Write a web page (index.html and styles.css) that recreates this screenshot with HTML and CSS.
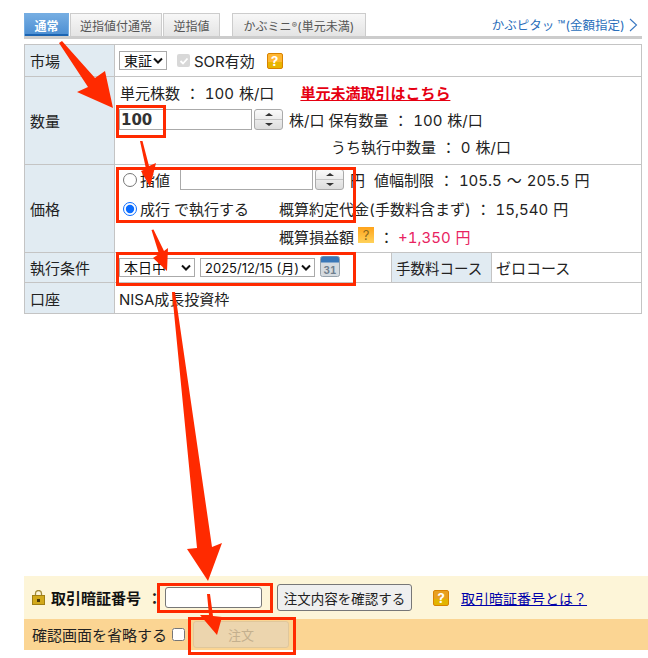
FILE: index.html
```html
<!DOCTYPE html>
<html lang="ja">
<head>
<meta charset="utf-8">
<title>注文</title>
<link rel="stylesheet" href="styles.css">
</head>
<body>
<div class="page">
  <nav class="tabs">
    <a class="tab active t1">通常</a>
    <a class="tab t2">逆指値付通常</a>
    <a class="tab t3">逆指値</a>
    <a class="tab t4">かぶミニ<span class="reg">®</span>(単元未満)</a>
    <a class="pitat">かぶピタッ<span class="tm">™</span>(金額指定)
      <svg class="chev" width="9" height="14" viewBox="0 0 9 14"><path d="M1 1l6.500 6L1 13" fill="none" stroke="#3a78c2" stroke-width="1.100"/></svg>
    </a>
  </nav>
  <table class="order">
    <colgroup><col class="c1"><col class="c2"><col class="c3"><col class="c4"></colgroup>
    <tr class="r-market">
      <th>市場</th>
      <td colspan="3">
        <div class="line">
          <select class="sel sel-market"><option>東証</option></select>
          <span class="sor"><span class="fake-check"><svg width="10" height="10" viewBox="0 0 10 10"><path d="M1.500 5l2.500 2.500 4.500-5" fill="none" stroke="#fff" stroke-width="1.800"/></svg></span>SOR有効</span>
          <span class="help help-market">?</span>
        </div>
      </td>
    </tr>
    <tr class="r-qty">
      <th>数量</th>
      <td colspan="3" class="stack">
        <div class="line l-unit"><span>単元株数 ： 100 株/口</span><a class="odd-link">単元未満取引はこちら</a></div>
        <div class="line l-qty">
          <input class="text qty" value="100">
          <span class="stepper"><i class="up"></i><i class="down"></i></span>
          <span class="unit">株/口</span><span class="held">保有数量 ： 100 株/口</span>
        </div>
        <div class="line l-exec">うち執行中数量 ： 0 株/口</div>
      </td>
    </tr>
    <tr class="r-price">
      <th>価格</th>
      <td colspan="3" class="stack">
        <div class="line l-limit">
          <label class="radio-label"><input type="radio" name="p" class="radio">指値</label>
          <input class="text price">
          <span class="stepper"><i class="up"></i><i class="down"></i></span>
          <span class="yen">円</span><span class="range">値幅制限 ： 105.5 ～ 205.5 円</span>
        </div>
        <div class="line l-market">
          <label class="radio-label"><input type="radio" name="p" class="radio" checked>成行</label>
          <span class="exec">で執行する</span>
          <span class="est">概算約定代金(手数料含まず) ： 15,540 円</span>
        </div>
        <div class="line l-pl">
          <span>概算損益額</span><span class="help help-pl">?</span><span class="colon">：</span><span class="plus">+1,350 円</span>
        </div>
      </td>
    </tr>
    <tr class="r-cond">
      <th>執行条件</th>
      <td>
        <div class="line">
          <select class="sel sel-day"><option>本日中</option></select>
          <select class="sel sel-date"><option>2025/12/15 (月)</option></select>
          <svg class="cal" width="20" height="21" viewBox="0 0 20 21">
            <rect x="0.500" y="0.500" width="19" height="20" rx="2" fill="#d5dbe0" stroke="#97a3ac"/>
            <path d="M1 2.500a2 2 0 0 1 2-2h14a2 2 0 0 1 2 2V6.500H1z" fill="#3a78b8"/>
            <text x="10" y="17.500" class="cal-num">31</text>
          </svg>
        </div>
      </td>
      <th class="course">手数料コース</th>
      <td>ゼロコース</td>
    </tr>
    <tr class="r-acct">
      <th>口座</th>
      <td colspan="3">NISA成長投資枠</td>
    </tr>
  </table>
  <section class="pin">
    <svg class="lock" width="13" height="15" viewBox="0 0 13 15">
      <path d="M3.500 6V3.500a3 3 0 0 1 6 0V6" fill="none" stroke="#a08a3a" stroke-width="1.300"/>
      <rect x="0.500" y="5.500" width="12" height="9" fill="#d2a91c" stroke="#a07f14"/>
      <rect x="5" y="9" width="3" height="3" fill="#4a3a08"/>
    </svg>
    <b class="pin-label">取引暗証番号</b><b class="pin-colon">：</b>
    <input class="pin-input" type="password">
    <button class="confirm">注文内容を確認する</button>
    <span class="help help-pin">?</span>
    <a class="pin-link">取引暗証番号とは？</a>
  </section>
  <section class="submit">
    <label class="skip">確認画面を省略する<input type="checkbox" class="skip-check"></label>
    <button class="order-btn" disabled>注文</button>
  </section>
</div>
<svg class="marks" width="648" height="658" viewBox="0 0 648 658">
  <g fill="none" stroke="#ff2a00" stroke-width="3">
    <rect x="117.500" y="106.500" width="47" height="30"/>
    <rect x="117.500" y="168.500" width="237" height="53"/>
    <rect x="117.500" y="253.500" width="237" height="31"/>
    <rect x="158.500" y="584.500" width="113" height="27"/>
    <rect x="189.500" y="618.500" width="105" height="35"/>
  </g>
  <g fill="#ff2a00">
    <polygon points="59,43 62,41 95,78 105,71 113,108 77,92 88,87"/>
    <polygon points="140,141 142.500,141 149,166 156,163 150,187 141,171 146,169"/>
    <polygon points="151.500,230 153.500,229.500 164,251 168,248 167,271 153,258 159,254"/>
    <polygon points="172,292 175,292 212,547 222,543 208,581 187,549 197,548"/>
    <polygon points="207,594 210,594 213,616 222,617 217,635 200,615 209,615"/>
  </g>
</svg>
</body>
</html>
```
FILE: styles.css
```css
* { box-sizing: border-box; }
html, body { margin: 0; padding: 0; background: #fff; }
body {
  width: 648px;
  height: 658px;
  overflow: hidden;
  position: relative;
  font-family: Inter, "Noto Sans CJK JP", sans-serif;
  font-size: 15px;
  font-variant-numeric: tabular-nums;
  word-spacing: 0.900px;
  color: #222;
}
.page { padding: 14px 0 0 24px; }

.tabs {
  display: flex;
  align-items: flex-end;
  width: 618px;
  height: 25px;
  border-bottom: 3px solid #ccc;
  font-size: 12px;
}
.tab {
  height: 23px;
  margin-right: 1px;
  display: flex;
  align-items: center;
  justify-content: center;
  background: linear-gradient(#f7f7f7, #e4e4e4);
  border: 1px solid #ccc;
  border-bottom: 0;
  color: #555;
}
.t1 { width: 45px; }
.t2 { width: 92px; }
.t3 { width: 57px; margin-right: 12px; }
.t4 { width: 134px; }
.reg { font-size: 8px; }
.active {
  background: linear-gradient(#75ade2, #4a8dd2);
  border-color: #75ade2;
  color: #fff;
  font-weight: bold;
  box-shadow: inset 0 -2px 0 #1b64b2;
}
.pitat {
  margin-left: auto;
  margin-right: 4px;
  align-self: flex-start;
  display: flex;
  align-items: center;
  margin-top: 1px;
  font-size: 12.500px;
  color: #2a6ebb;
}
.tm { font-size: 13px; margin-left: 3px; }
.chev { margin-left: 4px; }

.order {
  width: 618px;
  margin-top: 5px;
  border-collapse: collapse;
  table-layout: fixed;
  color: #222;
}
.c1 { width: 90px; }
.c2 { width: 277px; }
.c3 { width: 100px; }
.order th, .order td {
  border: 1px solid #c4c4c4;
  padding: 0 0 0 4px;
  font-weight: normal;
  text-align: left;
  vertical-align: middle;
}
.order th { background: #e1ebf2; padding-left: 5px; }
.order th.course { padding-left: 4px; font-size: 14.500px; }
.order td { background: #fff; }
.order td.stack { padding-bottom: 2px; }
.r-market { height: 32px; }
.r-qty, .r-price { height: 88px; }
.r-cond { height: 30px; }
.r-acct { height: 31px; }
.line { display: flex; align-items: center; white-space: nowrap; }

.sel {
  appearance: none;
  height: 19px;
  border: 1px solid #aaa;
  border-radius: 0;
  background: #fff url("data:image/svg+xml,%3Csvg xmlns='http://www.w3.org/2000/svg' width='10' height='7'%3E%3Cpath d='M1 1.500l4 4 4-4' fill='none' stroke='%23111' stroke-width='2'/%3E%3C/svg%3E") no-repeat right 3px center;
  font-family: inherit;
  font-size: 14px;
  color: #111;
  padding: 0 0 0 4px;
  word-spacing: 0;
}
.sel-market { width: 48px; }
.sel-day { width: 76px; }
.sel-date { width: 115px; margin-left: 5px; font-size: 13px; font-variant-numeric: normal; }
.sor { display: flex; align-items: center; margin-left: 10px; }
.fake-check {
  width: 13px;
  height: 13px;
  border-radius: 2px;
  background: #d8d8d8;
  margin-right: 4px;
  display: flex;
  align-items: center;
  justify-content: center;
}
.help {
  display: inline-flex;
  align-items: center;
  justify-content: center;
  width: 16px;
  height: 16px;
  background: linear-gradient(#ffb733 0 60%, #e8b400 60%);
  border: 1px solid #d98200;
  border-radius: 2px;
  color: #fff;
  font-size: 13px;
  font-weight: bold;
}
.help-market { margin-left: 12px; }
.help-pl {
  margin-left: 4px;
  margin-top: -4px;
  border: 0;
  border-radius: 0;
  background: linear-gradient(#ffa31a, #ffd25a);
  color: #8a6a20;
  font-weight: normal;
}
.help-pin { margin-left: 21px; background: linear-gradient(#e8a020 0 55%, #e2b400 55%); }

.l-unit { height: 24px; padding-left: 1px; }
.odd-link {
  margin-left: 26px;
  color: #e60012;
  font-weight: bold;
  text-decoration: underline;
}
.l-qty { height: 30px; }
.text {
  height: 21px;
  border: 1px solid #aaa;
  border-radius: 0;
  padding: 0 1px;
  font-family: "DejaVu Sans", sans-serif;
}
.qty { width: 133px; font-weight: bold; font-size: 15px; color: #333; }
.price { width: 133px; margin-left: 10px; }
.stepper {
  width: 29px;
  height: 21px;
  margin-left: 2px;
  border: 1px solid #aaa;
  border-radius: 3px;
  background: linear-gradient(#fafafa, #ddd);
  display: flex;
  flex-direction: column;
}
.stepper i { flex: 1; display: flex; align-items: center; justify-content: center; }
.stepper i::before {
  content: "";
  border-left: 4px solid transparent;
  border-right: 4px solid transparent;
}
.stepper .up { border-bottom: 1px solid #c4c4c4; }
.stepper .up::before { border-bottom: 3px solid #333; }
.stepper .down::before { border-top: 3px solid #333; }
.unit { margin-left: 6px; }
.held { margin-left: 4px; }
.l-exec { height: 24px; padding-left: 212px; }

.l-limit { height: 28px; padding-left: 4px; }
.l-market { height: 30px; padding-left: 4px; }
.l-pl { height: 26px; padding-left: 160px; }
.radio-label { display: flex; align-items: center; }
.radio { margin: 0 3px 0 0; width: 14px; height: 14px; accent-color: #0a6cff; }
.yen { margin-left: 6px; }
.range { margin-left: 9px; }
.exec { margin-left: 4px; }
.est { margin-left: 30px; }
.colon { margin-left: 5px; }
.plus { margin-left: 4px; color: #e8235f; }
.cal { margin-left: 5px; margin-top: -3px; }
.cal-num { font-size: 10px; font-weight: bold; fill: #6f7f8f; text-anchor: middle; }

.pin {
  width: 624px;
  height: 43px;
  margin-top: 262px;
  background: #fdf5d8;
  display: flex;
  align-items: center;
  padding-left: 8px;
}
.lock { flex: none; }
.pin-label { margin-left: 6px; font-size: 15px; color: #111; }
.pin-colon { margin-left: 6px; margin-right: 3px; }
.pin-input {
  width: 97px;
  height: 21px;
  border: 1px solid #777;
  border-radius: 3px;
  background: #fff;
}
.confirm {
  height: 27px;
  width: 135px;
  margin-left: 15px;
  padding: 0;
  font-family: inherit;
  font-size: 13.500px;
  background: #efefef;
  border: 1px solid #777;
  border-radius: 3px;
  color: #222;
}
.pin-link { margin-left: 12px; color: #00a; text-decoration: underline; font-size: 14px; }
.submit {
  width: 624px;
  height: 31px;
  background: #fbd593;
  display: flex;
  align-items: center;
  padding-left: 8px;
}
.skip { display: flex; align-items: center; color: #222; }
.skip-check { margin: 0 0 0 5px; width: 13px; height: 13px; }
.order-btn {
  width: 96px;
  height: 27px;
  margin-left: 8px;
  padding: 0;
  font-family: inherit;
  font-size: 13px;
  background: #ecd5ae;
  border: 1px solid #e0c79b;
  border-radius: 3px;
  color: #c4b08e;
}
.marks { position: absolute; top: 0; left: 0; pointer-events: none; }
```
